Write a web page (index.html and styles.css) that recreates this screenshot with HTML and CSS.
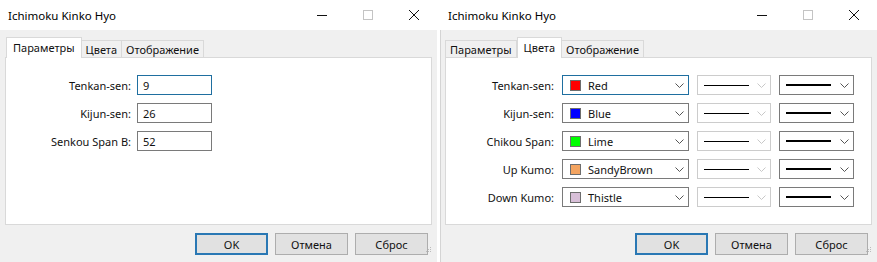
FILE: index.html
```html
<!DOCTYPE html>
<html>
<head>
<meta charset="utf-8">
<link rel="stylesheet" href="styles.css">
</head>
<body>
<div class="desk">
  <div class="win">
    <div class="titlebar">
      <span class="title">Ichimoku Kinko Hyo</span>
      <div class="caps">
        <span class="cap"><svg width="10" height="10" viewBox="0 0 10 10"><path d="M0 5.5H10" stroke="#111" stroke-width="1"/></svg></span>
        <span class="cap"><svg width="10" height="10" viewBox="0 0 10 10"><rect x="0.5" y="0.5" width="9" height="9" fill="none" stroke="#c4c4c4"/></svg></span>
        <span class="cap"><svg width="10" height="10" viewBox="0 0 10 10"><path d="M0 0L10 10M10 0L0 10" stroke="#111" stroke-width="1"/></svg></span>
      </div>
    </div>
    <div class="body">
      <div class="tabs">
        <span class="tab sel">Параметры</span>
        <span class="tab">Цвета</span>
        <span class="tab">Отображение</span>
      </div>
      <div class="panel">
        <div class="grid params">
          <span class="lbl">Tenkan-sen:</span><span class="inp focus">9</span>
          <span class="lbl">Kijun-sen:</span><span class="inp">26</span>
          <span class="lbl">Senkou Span B:</span><span class="inp">52</span>
        </div>
      </div>
      <div class="btns">
        <span class="btn def">OK</span>
        <span class="btn">Отмена</span>
        <span class="btn">Сброс</span>
        <svg class="grip" width="6" height="6" viewBox="0 0 6 6"><rect x="4" y="0" width="1" height="1" fill="#bbb"/><rect x="2" y="2" width="1" height="1" fill="#bbb"/><rect x="4" y="2" width="1" height="1" fill="#bbb"/><rect x="0" y="4" width="1" height="1" fill="#bbb"/><rect x="2" y="4" width="1" height="1" fill="#bbb"/><rect x="4" y="4" width="1" height="1" fill="#bbb"/></svg>
      </div>
    </div>
  </div>
  <div class="gap"></div>
  <div class="win">
    <div class="titlebar">
      <span class="title">Ichimoku Kinko Hyo</span>
      <div class="caps">
        <span class="cap"><svg width="10" height="10" viewBox="0 0 10 10"><path d="M0 5.5H10" stroke="#111" stroke-width="1"/></svg></span>
        <span class="cap"><svg width="10" height="10" viewBox="0 0 10 10"><rect x="0.5" y="0.5" width="9" height="9" fill="none" stroke="#c4c4c4"/></svg></span>
        <span class="cap"><svg width="10" height="10" viewBox="0 0 10 10"><path d="M0 0L10 10M10 0L0 10" stroke="#111" stroke-width="1"/></svg></span>
      </div>
    </div>
    <div class="body edge">
      <div class="tabs">
        <span class="tab">Параметры</span>
        <span class="tab sel">Цвета</span>
        <span class="tab">Отображение</span>
      </div>
      <div class="panel">
        <div class="grid colors">
          <span class="lbl">Tenkan-sen:</span>
          <span class="combo color focus"><span class="sw" style="background:#ff0000"></span><span class="cname">Red</span><svg class="chev" width="9" height="5" viewBox="0 0 9 5"><path d="M0.5 0.5L4.5 4.5L8.5 0.5" fill="none" stroke="#555"/></svg></span>
          <span class="combo line dis"><span class="ln thin"></span><svg class="chev" width="9" height="5" viewBox="0 0 9 5"><path d="M0.5 0.5L4.5 4.5L8.5 0.5" fill="none" stroke="#c8c8c8"/></svg></span>
          <span class="combo line"><span class="ln thick"></span><svg class="chev" width="9" height="5" viewBox="0 0 9 5"><path d="M0.5 0.5L4.5 4.5L8.5 0.5" fill="none" stroke="#555"/></svg></span>

          <span class="lbl">Kijun-sen:</span>
          <span class="combo color"><span class="sw" style="background:#0000ff"></span><span class="cname">Blue</span><svg class="chev" width="9" height="5" viewBox="0 0 9 5"><path d="M0.5 0.5L4.5 4.5L8.5 0.5" fill="none" stroke="#555"/></svg></span>
          <span class="combo line dis"><span class="ln thin"></span><svg class="chev" width="9" height="5" viewBox="0 0 9 5"><path d="M0.5 0.5L4.5 4.5L8.5 0.5" fill="none" stroke="#c8c8c8"/></svg></span>
          <span class="combo line"><span class="ln thick"></span><svg class="chev" width="9" height="5" viewBox="0 0 9 5"><path d="M0.5 0.5L4.5 4.5L8.5 0.5" fill="none" stroke="#555"/></svg></span>

          <span class="lbl">Chikou Span:</span>
          <span class="combo color"><span class="sw" style="background:#00ff00"></span><span class="cname">Lime</span><svg class="chev" width="9" height="5" viewBox="0 0 9 5"><path d="M0.5 0.5L4.5 4.5L8.5 0.5" fill="none" stroke="#555"/></svg></span>
          <span class="combo line dis"><span class="ln thin"></span><svg class="chev" width="9" height="5" viewBox="0 0 9 5"><path d="M0.5 0.5L4.5 4.5L8.5 0.5" fill="none" stroke="#c8c8c8"/></svg></span>
          <span class="combo line"><span class="ln thick"></span><svg class="chev" width="9" height="5" viewBox="0 0 9 5"><path d="M0.5 0.5L4.5 4.5L8.5 0.5" fill="none" stroke="#555"/></svg></span>

          <span class="lbl">Up Kumo:</span>
          <span class="combo color"><span class="sw" style="background:#f4a460"></span><span class="cname">SandyBrown</span><svg class="chev" width="9" height="5" viewBox="0 0 9 5"><path d="M0.5 0.5L4.5 4.5L8.5 0.5" fill="none" stroke="#555"/></svg></span>
          <span class="combo line dis"><span class="ln thin"></span><svg class="chev" width="9" height="5" viewBox="0 0 9 5"><path d="M0.5 0.5L4.5 4.5L8.5 0.5" fill="none" stroke="#c8c8c8"/></svg></span>
          <span class="combo line"><span class="ln thick"></span><svg class="chev" width="9" height="5" viewBox="0 0 9 5"><path d="M0.5 0.5L4.5 4.5L8.5 0.5" fill="none" stroke="#555"/></svg></span>

          <span class="lbl">Down Kumo:</span>
          <span class="combo color"><span class="sw" style="background:#d8bfd8"></span><span class="cname">Thistle</span><svg class="chev" width="9" height="5" viewBox="0 0 9 5"><path d="M0.5 0.5L4.5 4.5L8.5 0.5" fill="none" stroke="#555"/></svg></span>
          <span class="combo line dis"><span class="ln thin"></span><svg class="chev" width="9" height="5" viewBox="0 0 9 5"><path d="M0.5 0.5L4.5 4.5L8.5 0.5" fill="none" stroke="#c8c8c8"/></svg></span>
          <span class="combo line"><span class="ln thick"></span><svg class="chev" width="9" height="5" viewBox="0 0 9 5"><path d="M0.5 0.5L4.5 4.5L8.5 0.5" fill="none" stroke="#555"/></svg></span>
        </div>
      </div>
      <div class="btns">
        <span class="btn def">OK</span>
        <span class="btn">Отмена</span>
        <span class="btn">Сброс</span>
        <svg class="grip" width="6" height="6" viewBox="0 0 6 6"><rect x="4" y="0" width="1" height="1" fill="#bbb"/><rect x="2" y="2" width="1" height="1" fill="#bbb"/><rect x="4" y="2" width="1" height="1" fill="#bbb"/><rect x="0" y="4" width="1" height="1" fill="#bbb"/><rect x="2" y="4" width="1" height="1" fill="#bbb"/><rect x="4" y="4" width="1" height="1" fill="#bbb"/></svg>
      </div>
    </div>
  </div>
</div>
</body>
</html>
```
FILE: styles.css
```css
* { box-sizing: border-box; }
html, body { margin: 0; padding: 0; background: #ffffff; }
body {
  font-family: "Noto Sans", "Open Sans", "Liberation Sans", sans-serif;
  font-size: 11px;
  color: #111;
  width: 877px;
  height: 262px;
  overflow: hidden;
}
.desk { display: flex; height: 262px; }
.gap { width: 3px; background: #fff; }
.win { width: 437px; display: flex; flex-direction: column; }
.titlebar {
  height: 30px;
  background: #fff;
  display: flex;
  align-items: center;
  justify-content: space-between;
}
.title { padding-left: 8px; font-size: 11.5px; color: #000; }
.caps { display: flex; height: 30px; }
.cap { width: 46px; height: 30px; display: flex; align-items: center; justify-content: center; }
.body {
  flex: 1;
  background: #f0f0f0;
  padding: 7px 5px 0 5px;
  display: flex;
  flex-direction: column;
}
.body.edge { border-left: 1px solid #d4d4d4; padding-left: 4px; }
.tabs { display: flex; align-items: flex-end; height: 21px; margin-bottom: -1px; padding-left: 1px; }
.tab {
  height: 18px;
  border: 1px solid #d9d9d9;
  border-bottom: none;
  background: #f0f0f0;
  padding: 0 4px;
  display: flex;
  align-items: center;
  margin-left: -1px;
  line-height: 1;
}
.tab.sel {
  position: relative;
  z-index: 1;
  height: 21px;
  background: #fff;
  padding: 0 6px 2px 6px;
  margin-left: 0;
  margin-right: -1px;
}
.tab.sel + .tab { margin-left: 0; }
.panel {
  height: 168px;
  background: #fff;
  border: 1px solid #d9d9d9;
  padding-top: 17px;
}
.grid { display: grid; row-gap: 8px; align-items: center; }
.params { grid-template-columns: 125px 75px; column-gap: 6px; }
.colors { grid-template-columns: 108px 127px 74px 75px; column-gap: 8px; }
.lbl { text-align: right; white-space: nowrap; }
.inp {
  height: 20px;
  border: 1px solid #7a7a7a;
  background: #fff;
  padding-left: 5px;
  display: flex;
  align-items: center;
}
.inp.focus { border-color: #1f6fa0; }
.combo {
  height: 20px;
  border: 1px solid #7a7a7a;
  background: #fff;
  display: flex;
  align-items: center;
  padding: 0 4px 0 7px;
}
.combo.focus { border-color: #1f6fa0; }
.combo.dis { border-color: #cccccc; }
.sw { width: 11px; height: 11px; border: 1px solid #6d6d6d; flex: none; }
.cname { margin-left: 7px; flex: 1; }
.chev { flex: none; margin-left: auto; }
.line { padding-left: 6px; }
.ln { width: 45px; background: #000; flex: none; }
.ln.thin { height: 1px; }
.ln.thick { height: 2px; }
.btns {
  display: flex;
  justify-content: flex-end;
  align-items: flex-start;
  gap: 7px;
  padding-top: 8px;
  padding-right: 4px;
  position: relative;
}
.btn {
  width: 73px;
  height: 22px;
  border: 1px solid #adadad;
  background: #e1e1e1;
  display: flex;
  align-items: center;
  justify-content: center;
}
.btn.def { border: 2px solid #2a78b4; }
.grip { position: absolute; right: 0; bottom: 2px; }
```
